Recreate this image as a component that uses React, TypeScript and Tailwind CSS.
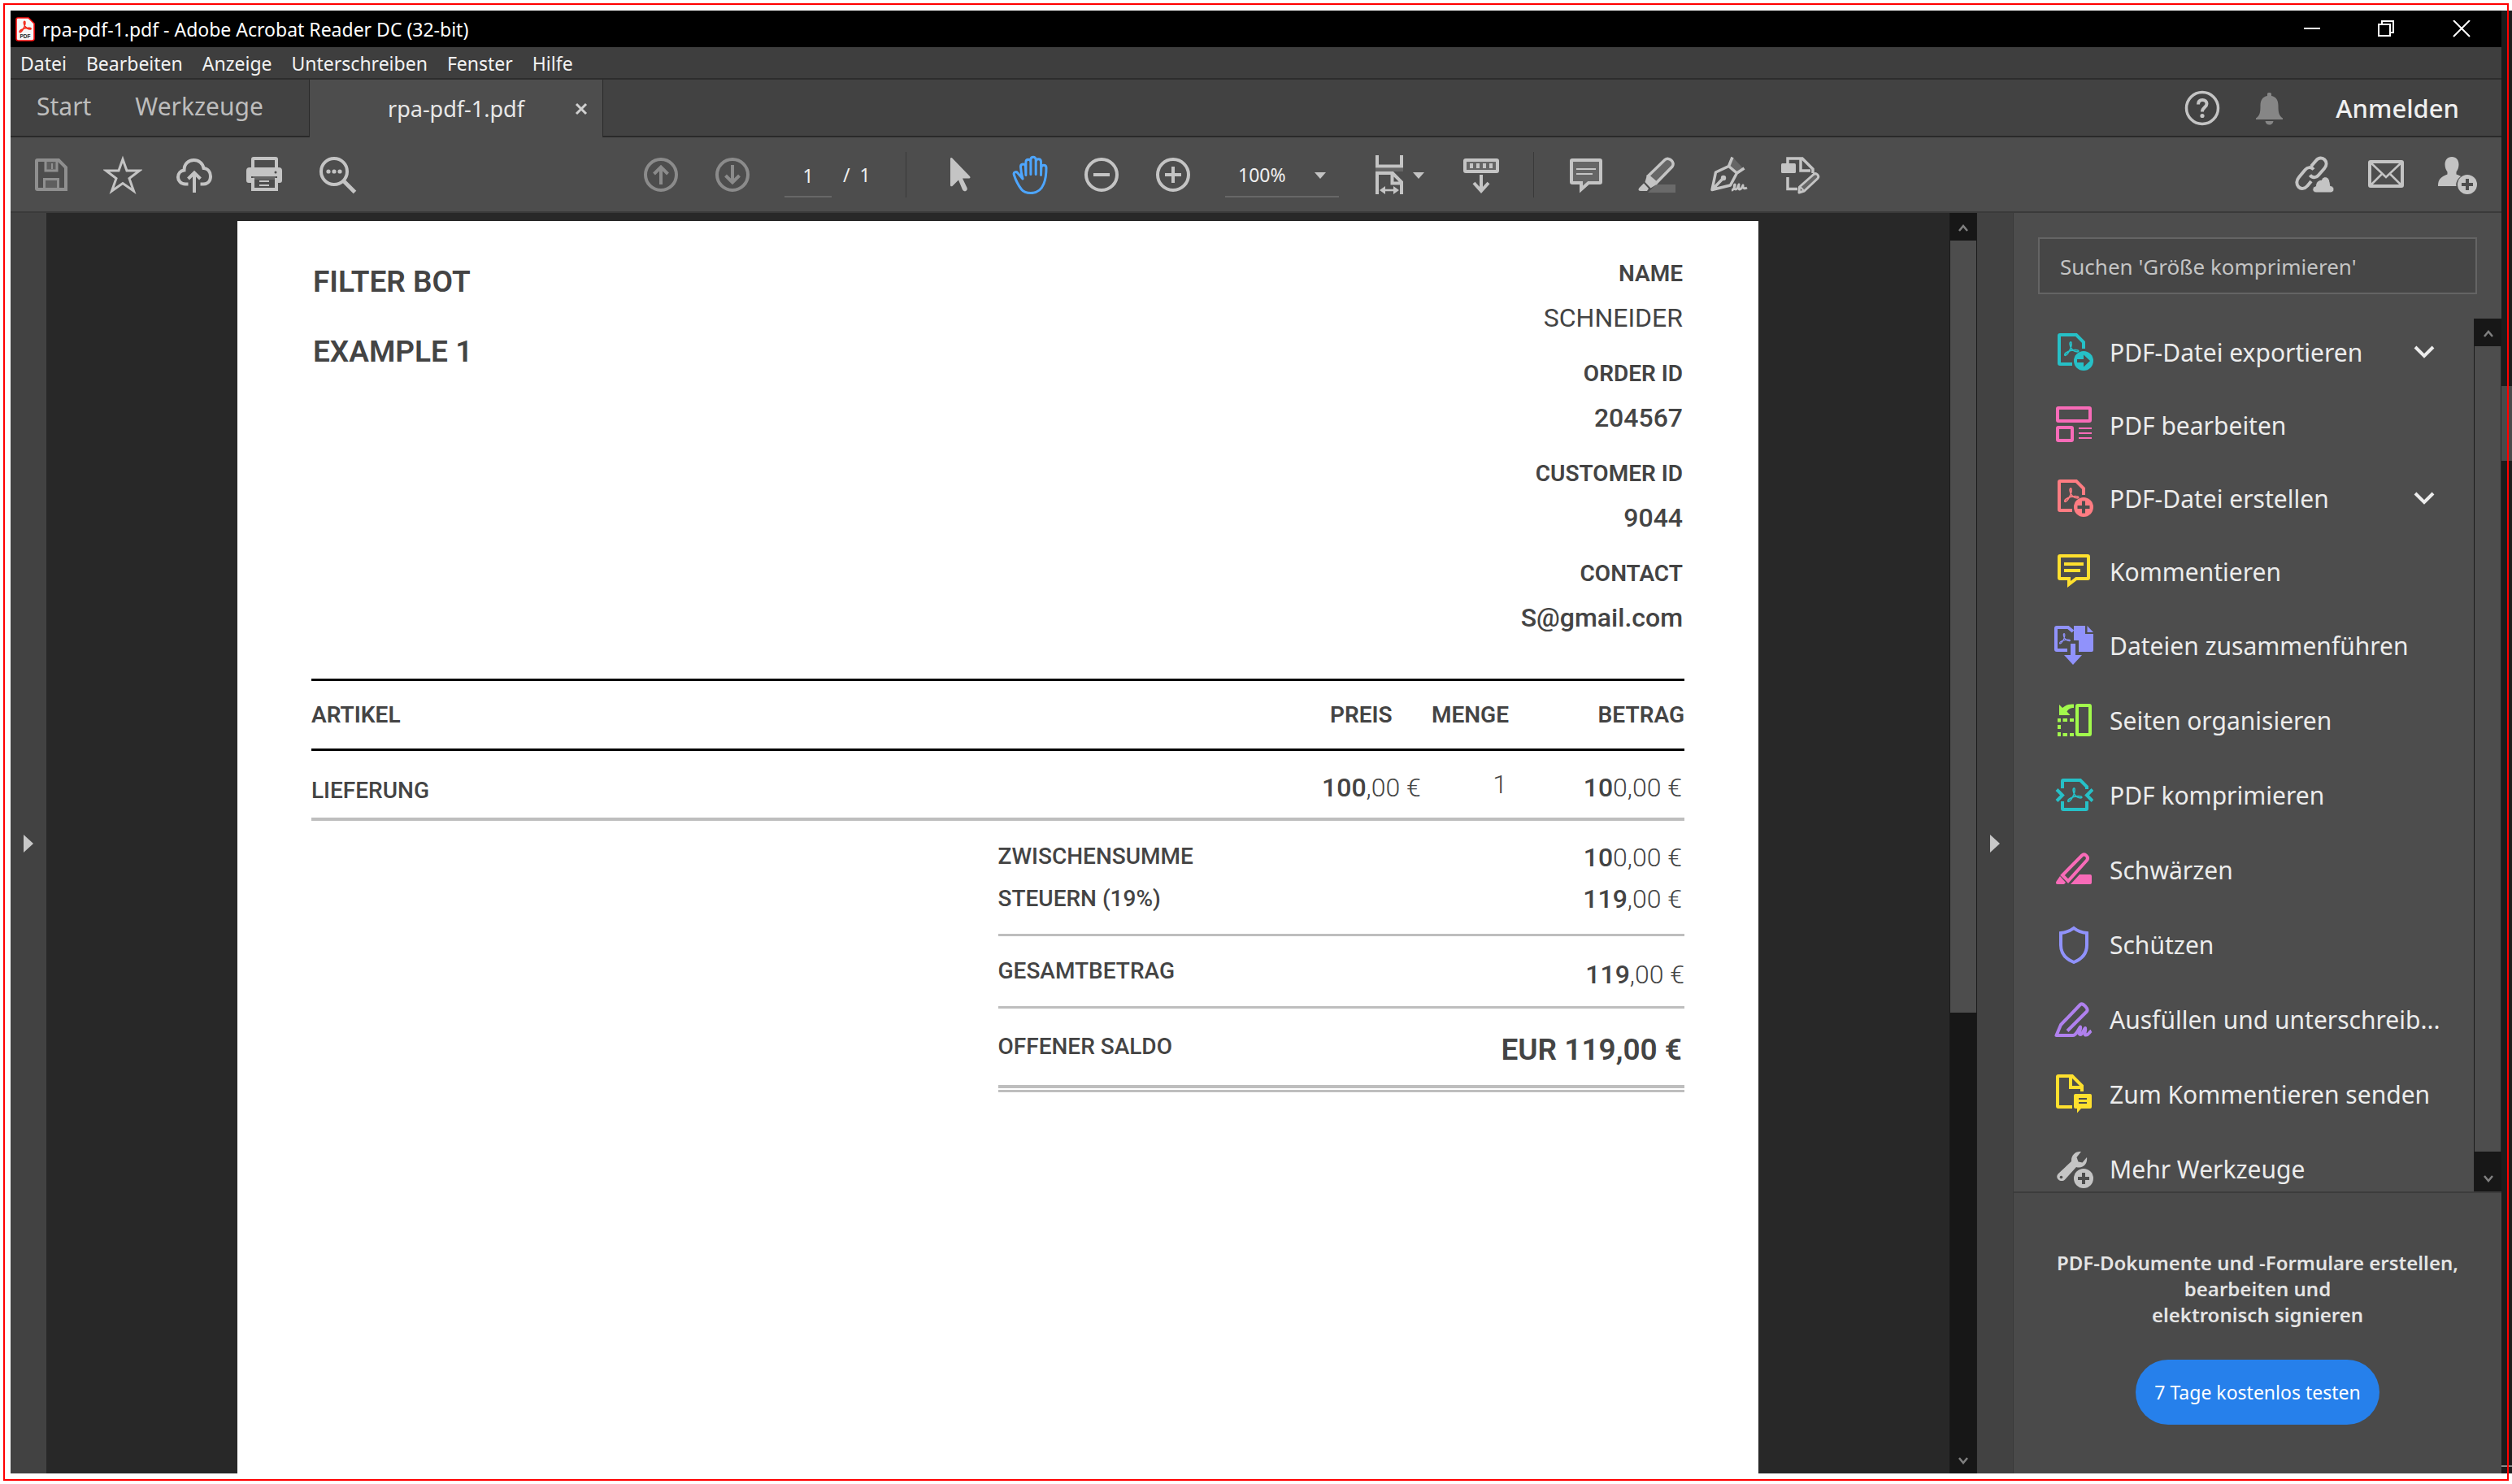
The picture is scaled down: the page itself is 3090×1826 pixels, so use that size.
import type { ReactNode } from "react";

const UI_FONT = "font-['Noto_Sans',sans-serif]";
const DOC_FONT = "font-['Roboto',sans-serif]";

function Icon({ children, className = "" }: { children: ReactNode; className?: string }) {
  return (
    <svg viewBox="0 0 48 48" className={`h-12 w-12 shrink-0 ${className}`} fill="none" stroke="currentColor" strokeWidth={4} aria-hidden="true">
      {children}
    </svg>
  );
}

function IconButton({ label, children, className = "text-[#c4c4c4]" }: { label: string; children: ReactNode; className?: string }) {
  return (
    <button type="button" aria-label={label} className={`flex shrink-0 items-center ${className}`}>
      {children}
    </button>
  );
}

/* Acrobat three-loop mark, drawn in an 18 × 18 area */
function AcrobatMark({ x, y, scale = 1, width = 1.6 }: { x: number; y: number; scale?: number; width?: number }) {
  return (
    <path
      transform={`translate(${x} ${y}) scale(${scale})`}
      strokeWidth={width}
      strokeLinejoin="round"
      d="M8.2 0.8C6.4 1 7 5.6 9 8.6s5.400 4.400 8 4.200c1.600-.400.800-2-1.600-2.100C11 10.500 5.500 12 2.500 14c-2.200 1.500-2.200 3.600-.800 3.300C4 16.500 6.600 12 8 8.500 9.300 5 9.700 1 8.200.8z"
    />
  );
}

const PlusBadge = () => (
  <>
    <circle cx="36" cy="36" r="12" fill="currentColor" stroke="none" />
    <path d="M36 29v14M29 36h14" stroke="#4d4d4d" />
  </>
);

/* ---------- title bar ---------- */

function TitleBar() {
  return (
    <header className="flex h-[45px] items-center bg-black pl-[6px] pr-[38px] text-white">
      <svg viewBox="0 0 24 30" className="h-[30px] w-6" fill="none" aria-hidden="true">
        <path d="M3 1h13l7 7v18.500a2.500 2.500 0 0 1-2.500 2.500h-17A2.500 2.500 0 0 1 1 26.500V3a2 2 0 0 1 2-2z" fill="#f6f6f6" stroke="#f11" strokeWidth="1.600" />
        <g stroke="#f32a1a">
          <AcrobatMark x={4.5} y={4.5} scale={0.82} width={1.9} />
        </g>
        <text x="12" y="26" textAnchor="middle" fontSize="6.500" fontWeight="700" fill="#222" fontFamily="Liberation Sans, sans-serif">PDF</text>
      </svg>
      <h1 className="ml-[9px] text-[23px] leading-8">rpa-pdf-1.pdf - Adobe Acrobat Reader DC (32-bit)</h1>
      <div className="ml-auto flex gap-[70px]">
        <button type="button" aria-label="Minimieren">
          <svg viewBox="0 0 22 22" className="h-[22px] w-[22px]" stroke="white" strokeWidth="2" fill="none"><path d="M1 10h20" /></svg>
        </button>
        <button type="button" aria-label="Wiederherstellen">
          <svg viewBox="0 0 22 22" className="h-[22px] w-[22px]" stroke="white" strokeWidth="2" fill="none"><path d="M1 5h14v14H1zM5 5V1h14v14h-4" /></svg>
        </button>
        <button type="button" aria-label="Schließen">
          <svg viewBox="0 0 22 22" className="h-[22px] w-[22px]" stroke="white" strokeWidth="2" fill="none"><path d="M1 0l20 20M21 0L1 20" /></svg>
        </button>
      </div>
    </header>
  );
}

const MENUS = ["Datei", "Bearbeiten", "Anzeige", "Unterschreiben", "Fenster", "Hilfe"];

function MenuBar() {
  return (
    <nav className="flex h-10 items-center gap-6 border-b-2 border-[#2d2d2d] bg-[#3e3e3e] pl-3 pt-0.5 text-[23px] leading-8 text-[#f2f2f2]">
      {MENUS.map((m) => (
        <button type="button" key={m}>{m}</button>
      ))}
    </nav>
  );
}

function TabRow() {
  return (
    <div className="flex h-[71px] bg-[#424242]">
      <div className="flex w-[368px] items-center gap-[54px] border-b-2 border-r border-[#2a2a2a] pb-1 pl-8 text-[30px] text-[#bdbdbd]">
        <button type="button">Start</button>
        <button type="button">Werkzeuge</button>
      </div>
      <div className="flex w-[360px] items-center bg-[#4d4d4d] pl-[96px] pr-[18px] text-[27px] text-[#e8e8e8]">
        <button type="button" className="pt-0.5">rpa-pdf-1.pdf</button>
        <button type="button" aria-label="Tab schließen" className="ml-auto">
          <svg viewBox="0 0 16 16" className="h-4 w-4" stroke="#d0d0d0" strokeWidth="3" fill="none"><path d="M2 2l12 12M14 2L2 14" /></svg>
        </button>
      </div>
      <div className="flex flex-1 items-center justify-end border-b-2 border-l border-[#2a2a2a] pr-[52px] text-[#c4c4c4]">
        <IconButton label="Hilfe">
          <Icon>
            <circle cx="24" cy="24" r="19.500" strokeWidth="3.500" />
            <path d="M19 19.500c0-3.500 2-5.500 5.200-5.500s5.300 1.800 5.300 4.800c0 4.200-5.500 4.500-5.500 9.700" />
            <circle cx="24" cy="33.500" r="2.600" fill="currentColor" stroke="none" />
          </Icon>
        </IconButton>
        <button type="button" aria-label="Benachrichtigungen" className="ml-[35px] text-[#868686]">
          <Icon>
            <path d="M21 9V6.500C21 5.500 22 5 23.500 5S26 5.500 26 6.500V9c6 1.200 8.500 5.500 8.500 12 0 8 .500 12 5.500 15.500V38H7v-1.500C12 33 12.500 29 12.500 21c0-6.500 2.500-10.800 8.500-12zM18.500 40h10c-.500 3-2.500 4.500-5 4.500s-4.500-1.500-5-4.500z" fill="currentColor" stroke="none" />
          </Icon>
        </button>
        <button type="button" className="ml-[57px] pt-0.5 text-[31px] font-medium text-[#f0f0f0]">Anmelden</button>
      </div>
    </div>
  );
}

/* ---------- toolbar ---------- */

const Separator = () => <div className="h-14 w-px shrink-0 bg-[#393939]" />;

function Toolbar() {
  return (
    <div className="flex h-[93px] items-center border-b-2 border-[#3a3a3a] bg-[#4d4d4d] pl-[26px] pr-[30px]">
      <div className="flex flex-1 gap-10">
        <IconButton label="Speichern" className="text-[#8f8f8f]">
          <Icon>
            <path d="M17 6h14v14H17zM14 28h20v14H14z" fill="#5e5e5e" stroke="none" />
            <path d="M7 6h26l9 9v27H7a1 1 0 0 1-1-1V7a1 1 0 0 1 1-1z" />
            <path d="M17 6v13h14V6M15.500 43V29.500h17V43" strokeWidth="3" />
            <path d="M25 10v7" strokeWidth="2" />
          </Icon>
        </IconButton>
        <IconButton label="Favorit">
          <Icon>
            <path d="M24 5l5 14h15.500L32 28.500l5.500 15.500L24 34.500 10.500 44 16 28.500 3.500 19H19z" strokeWidth="3" />
          </Icon>
        </IconButton>
        <IconButton label="In Cloud hochladen">
          <Icon>
            <path d="M16.500 35.500H13C7.500 35.500 4 31.500 4 27c0-4.500 3-8 7.500-8.500C11.500 11 16.500 6 23.500 6c6 0 11 4 12 10 5 .500 8.500 4.500 8.500 10 0 5.500-3.500 9.500-9 9.500h-3.500" />
            <path d="M24 46V22M16.500 29l7.500-7.500L31.500 29" />
          </Icon>
        </IconButton>
        <IconButton label="Drucken">
          <Icon>
            <rect x="8" y="4" width="29" height="14" rx="1" />
            <path d="M4 15h36a4 4 0 0 1 4 4v12a3 3 0 0 1-3 3h-3v-8H6v8H3a3 3 0 0 1-3-3V19a4 4 0 0 1 4-4z" fill="currentColor" stroke="none" />
            <path d="M8 26h28v4H8z" fill="#666" stroke="none" />
            <path d="M8 28v14h29V28" />
            <path d="M16 32h12M16 37h12" strokeWidth="2" />
            <circle cx="36" cy="21" r="1.500" fill="#4d4d4d" stroke="none" />
          </Icon>
        </IconButton>
        <IconButton label="Suchen">
          <Icon>
            <circle cx="20" cy="20" r="16" />
            <path d="M32 32l13.500 13.500" strokeWidth="5" />
            <g fill="currentColor" stroke="none">
              <circle cx="13" cy="20" r="2.600" /><circle cx="20" cy="20" r="2.600" /><circle cx="27" cy="20" r="2.600" />
            </g>
          </Icon>
        </IconButton>
      </div>

      <div className="flex items-center gap-10 pr-[58px] text-[23px] text-[#f0f0f0]">
        <IconButton label="Vorherige Seite" className="text-[#8b8b8b]">
          <Icon><circle cx="24" cy="24" r="19" /><path d="M24 36V16M15.500 23l8.500-8.500 8.500 8.500" /></Icon>
        </IconButton>
        <IconButton label="Nächste Seite" className="text-[#8b8b8b]">
          <Icon><circle cx="24" cy="24" r="19" /><path d="M24 12v20M15.500 25l8.500 8.500 8.500-8.500" /></Icon>
        </IconButton>
        <div className="flex w-[109px] items-end gap-[14px]">
          <input aria-label="Seitenzahl" defaultValue="1" className="h-14 w-[58px] border-b-2 border-[#676767] bg-transparent pt-1 text-center outline-none" />
          <span className="whitespace-pre pb-[10px]">/  1</span>
        </div>
        <Separator />
        <IconButton label="Auswahlwerkzeug">
          <Icon>
            <path d="M14 4.500c0-1.500 1.500-2 2.500-.700L38 26c1 1.500.500 2.500-1 2.500h-8l5.500 11.500c1.500 4-3.500 6-5.500 2.500l-5-12-7 7c-1.500 1.500-3 1-3-1z" fill="currentColor" stroke="none" />
          </Icon>
        </IconButton>
        <IconButton label="Handwerkzeug" className="text-[#4ea6ff]">
          <Icon>
            <path d="M15 29L8.500 21.500c-1.500-1.700-5.200-.800-4.200 2.500C6.500 31 10 37.500 13.500 42c2.500 3.200 6 4.500 11.500 4.500 8 0 13-4 16-11.500 2-5 3-10 3-19.500 0-4.500-6-4.500-6.200 0l-.300 9V8c0-4.500-6.300-4.500-6.300 0v15.500V5.500c0-4.300-6.300-4.300-6.300 0v18V8.500c0-4.300-6-4.300-6 0v16L18.500 14c-.500-4.500-6.300-3.500-6 .500.300 5 1 9 2.500 14.500z" strokeWidth="3" strokeLinejoin="round" />
          </Icon>
        </IconButton>
        <IconButton label="Verkleinern">
          <Icon><circle cx="24" cy="24" r="19" /><path d="M14 24h20" /></Icon>
        </IconButton>
        <IconButton label="Vergrößern">
          <Icon><circle cx="24" cy="24" r="19" /><path d="M14 24h20M24 14v20" /></Icon>
        </IconButton>
        <div className="relative w-[140px]">
          <select aria-label="Zoomstufe" className="h-14 w-full appearance-none border-b-2 border-[#676767] bg-transparent pl-4 pt-1 outline-none">
            <option>100%</option>
          </select>
          <svg viewBox="0 0 14 8" className="pointer-events-none absolute right-4 top-[25px] h-2 w-[14px]" fill="#c4c4c4" aria-hidden="true"><path d="M0 0h14L7 8z" /></svg>
        </div>
        <button type="button" aria-label="Seite anpassen" className="text-[#c4c4c4]">
          <svg viewBox="0 0 71 48" className="h-12 w-[71px]" fill="none" stroke="currentColor" strokeWidth="4" aria-hidden="true">
            <path d="M7 0v13.500h30V0" />
            <path d="M5 16h34v4H5z" fill="#666" stroke="none" />
            <path d="M7 48V22h19l11 11v15M25.500 22v12.500H37" />
            <path d="M15 43h14" strokeWidth="2.500" />
            <path d="M10 43l7-5v10zM34 43l-7-5v10z" fill="currentColor" stroke="none" />
            <path d="M51 21h14l-7 8z" fill="currentColor" stroke="none" />
          </svg>
        </button>
        <IconButton label="Tastatur">
          <Icon>
            <rect x="4" y="6" width="40" height="14" rx="1" fill="#666" />
            <path d="M12 10v6M20 10v6M28 10v6M36 10v6" />
            <path d="M24 24v19M15 34l9 10 9-10" />
          </Icon>
        </IconButton>
        <Separator />
        <IconButton label="Kommentar">
          <Icon>
            <path d="M7 6h34a1 1 0 0 1 1 1v26a1 1 0 0 1-1 1H27l-9 8v-8H7a1 1 0 0 1-1-1V7a1 1 0 0 1 1-1z" fill="#666" />
            <path d="M12 17h24M12 23h20" strokeWidth="2" />
          </Icon>
        </IconButton>
        <IconButton label="Hervorheben">
          <Icon>
            <path d="M12 46l10-10h24v10z" fill="#6a6a6a" stroke="none" />
            <path d="M12.500 25.500L33 5.500c5-4 13 3 9 8.500L22.500 34z" fill="#666" strokeWidth="3.500" />
            <path d="M11 24.500l12.500 11-8 5-7-7.500zM7 34.500l6 6.500-2 3H3c-3 0-3-2-1.500-4z" fill="currentColor" stroke="none" />
          </Icon>
        </IconButton>
        <IconButton label="Unterschrift">
          <Icon>
            <path d="M29 3l13 14-8 4.500-9-8z" fill="#666" stroke="none" />
            <path d="M28 2.500L23.500 13.500 7.500 21 3 42.500 25.500 37l8-15L23.500 13.500M42.500 16l-9 6M3.500 42L16 29" strokeWidth="3.500" strokeLinejoin="round" />
            <circle cx="17" cy="28" r="3.200" fill="currentColor" stroke="none" />
            <path d="M27 43c3 0 5-7 4-7s-1 6 1 6 4-6 4-6-1 6 1 6 4-5 4-5-1 6 5 3" strokeWidth="3" strokeLinejoin="round" />
          </Icon>
        </IconButton>
        <IconButton label="Seiten bearbeiten">
          <Icon>
            <path d="M8 11V4h18l13 13v5" strokeWidth="3.500" />
            <path d="M24 5v14h12" strokeWidth="3.500" />
            <rect x="0" y="10" width="18" height="12" rx="1.500" fill="currentColor" stroke="none" />
            <path d="M8 27v14.500h12" strokeWidth="3.500" />
            <path d="M40 23.500c3-2.500 7.500 1.500 5 5L28.500 44l-6.500 2 .500-7z" fill="#666" strokeWidth="3" strokeLinejoin="round" />
            <path d="M23 38.500l5 5" strokeWidth="2" />
          </Icon>
        </IconButton>
      </div>

      <div className="flex flex-1 justify-end gap-10">
        <IconButton label="Link freigeben">
          <Icon>
            <path d="M20 13.500l6-7c3.500-4 8-3.500 10.500-1s3 7-.500 11l-7 8c-3 3.500-8 3.500-10.500 0M23 17.500c-3-3.500-7.500-3-10.500.500L5 27c-3.500 4-3.500 9-.500 12s7.500 2.500 11-1.500l4.500-5.500" />
            <path d="M26 46c-5 0-6-7-.500-8 0-5 4-8 7-7.500 2-6 10-5 10.500 3 .500 2 .500 3 .500 4 6 .500 6 8.500 0 8.500z" fill="currentColor" stroke="#4d4d4d" strokeWidth="1" />
          </Icon>
        </IconButton>
        <IconButton label="Per E-Mail senden">
          <Icon>
            <rect x="4" y="8" width="40" height="30" rx="1" />
            <path d="M5 9l19 18L43 9M5 37l14-14M43 37L29 23" strokeWidth="2.500" />
          </Icon>
        </IconButton>
        <IconButton label="Personen hinzufügen">
          <Icon>
            <path d="M17 2c5.500 0 8.500 4 8.500 9.500 0 4-1.500 7-3 9v3c3 1 5 2 5.500 2.500-4 3-6.500 8-5.500 12H0C0 30 3 27 11.500 23.500v-3c-1.500-2-3-5-3-9C8.500 6 11.500 2 17 2z" fill="currentColor" stroke="none" />
            <PlusBadge />
          </Icon>
        </IconButton>
      </div>
    </div>
  );
}

/* ---------- document ---------- */

const FACTS = [
  { label: "NAME", value: "SCHNEIDER", weight: "font-normal" },
  { label: "ORDER ID", value: "204567", weight: "font-medium" },
  { label: "CUSTOMER ID", value: "9044", weight: "font-medium" },
  { label: "CONTACT", value: "S@gmail.com", weight: "font-medium" },
];

function Amount({ strong, rest }: { strong: string; rest: string }) {
  return (
    <span className="font-light">
      <span className="font-medium">{strong}</span>
      {rest}
    </span>
  );
}

function Invoice() {
  return (
    <article className={`mx-[235px] mt-[10px] flex-1 bg-white px-[91px] pt-10 text-[#444] ${DOC_FONT}`}>
      <div className="flex justify-between px-0.5">
        <div className="pt-[13px] text-[37px] font-semibold leading-[44px]">
          <h2>FILTER BOT</h2>
          <p className="mt-[42px]">EXAMPLE 1</p>
        </div>
        <dl className="grid gap-[15px] text-right">
          {FACTS.map((f) => (
            <div key={f.label}>
              <dt className="text-[28px] font-semibold leading-[50px]">{f.label}</dt>
              <dd className={`text-[32px] leading-[58px] ${f.weight}`}>{f.value}</dd>
            </div>
          ))}
        </dl>
      </div>

      <table className="mt-[46px] w-full">
        <thead>
          <tr className="h-[86px] border-y-3 border-black text-left text-[28px]">
            <th className="font-semibold">ARTIKEL</th>
            <th className="w-[132px] pl-[10px] font-semibold">PREIS</th>
            <th className="w-[100px] pr-0.5 text-right font-semibold">MENGE</th>
            <th className="w-[214px] text-right font-semibold">BETRAG</th>
          </tr>
        </thead>
        <tbody>
          <tr className="h-[85px] border-b-4 border-[#bebebe] text-[32px]">
            <td className="pt-4 text-[28px] font-medium">LIEFERUNG</td>
            <td className="pt-2"><Amount strong="100" rest=",00 €" /></td>
            <td className="pr-1 text-right font-light">1</td>
            <td className="pr-[3px] pt-2 text-right"><Amount strong="10" rest="0,00 €" /></td>
          </tr>
        </tbody>
      </table>

      <table className="ml-auto w-1/2 border-b-3 border-[#bebebe]">
        <tbody className="text-right text-[32px]">
          <tr className="h-[71px]">
            <th className="pt-[18px] text-left text-[28px] font-medium">ZWISCHENSUMME</th>
            <td className="pr-[3px] pt-5"><Amount strong="10" rest="0,00 €" /></td>
          </tr>
          <tr className="h-[70px] border-b-3 border-[#bebebe]">
            <th className="pb-[17px] text-left text-[28px] font-medium">STEUERN (19%)</th>
            <td className="pb-[17px] pr-[3px]"><Amount strong="119" rest=",00 €" /></td>
          </tr>
          <tr className="h-[89px] border-b-3 border-[#bebebe]">
            <th className="text-left text-[28px] font-medium">GESAMTBETRAG</th>
            <td className="pt-2"><Amount strong="119" rest=",00 €" /></td>
          </tr>
          <tr className="h-[97px] border-b-4 border-[#bebebe]">
            <th className="text-left text-[28px] font-medium">OFFENER SALDO</th>
            <td className="pr-[3px] pt-2 text-[37px] font-semibold">EUR 119,00 €</td>
          </tr>
          <tr className="h-[6px]"><td colSpan={2} className="p-0" /></tr>
        </tbody>
      </table>
    </article>
  );
}

/* ---------- side panels ---------- */

function Caret({ up = false }: { up?: boolean }) {
  return (
    <svg viewBox="0 0 12 12" className="h-3 w-3" fill="none" stroke="#808080" strokeWidth="2.500" aria-hidden="true">
      <path d={up ? "M1 9l5-6 5 6" : "M1 3l5 6 5-6"} />
    </svg>
  );
}

function PaneHandle({ label }: { label: string }) {
  return (
    <button type="button" aria-label={label} className="flex w-11 shrink-0 items-center justify-center bg-[#424242]">
      <svg viewBox="0 0 12 22" className="h-[22px] w-3" fill="#c8c8c8" aria-hidden="true"><path d="M0 0l12 11L0 22z" /></svg>
    </button>
  );
}

const DocShape = () => <path d="M22 39H7a1 1 0 0 1-1-1V4a1 1 0 0 1 1-1h20l9 9v8" />;

type Tool = { name: string; color: string; expandable?: boolean; tall?: boolean; art: ReactNode };

const TOOLS: Tool[] = [
  {
    name: "PDF-Datei exportieren", color: "text-[#26c0c7]", expandable: true,
    art: (
      <>
        <DocShape />
        <AcrobatMark x={12} y={11} />
        <circle cx="36" cy="35" r="12" fill="currentColor" stroke="none" />
        <path d="M28 33h8v-5.500l8 7.500-8 7.500V37h-8z" fill="#4d4d4d" stroke="none" />
      </>
    ),
  },
  {
    name: "PDF bearbeiten", color: "text-[#f86bb8]",
    art: (
      <>
        <rect x="4" y="3" width="40" height="16" rx="1" />
        <rect x="4" y="27" width="18" height="16" rx="1" />
        <path d="M30 28h16M30 34h16M30 40h16" strokeWidth="2" />
      </>
    ),
  },
  {
    name: "PDF-Datei erstellen", color: "text-[#ff7c82]", expandable: true,
    art: (
      <>
        <DocShape />
        <AcrobatMark x={12} y={11} />
        <circle cx="36" cy="35" r="12" fill="currentColor" stroke="none" />
        <path d="M36 27.500v15M28.500 35h15" stroke="#4d4d4d" />
      </>
    ),
  },
  {
    name: "Kommentieren", color: "text-[#ffe02e]",
    art: (
      <>
        <path d="M7 5h34a1 1 0 0 1 1 1v26a1 1 0 0 1-1 1H27l-9 7v-7H7a1 1 0 0 1-1-1V6a1 1 0 0 1 1-1z" />
        <path d="M12 15h24M12 23h20" />
      </>
    ),
  },
  {
    name: "Dateien zusammenführen", color: "text-[#9092fb]", tall: true,
    art: (
      <>
        <path d="M16 30H3a1 1 0 0 1-1-1V3a1 1 0 0 1 1-1h14l6 5" />
        <AcrobatMark x={6} y={9} scale={0.75} />
        <path d="M24 0h14v10h10v20a2 2 0 0 1-2 2H30V18h-6zM40.500 0L48 8h-7.500zM20 22h6v14h8L23 48 12 36h8z" fill="currentColor" stroke="none" />
      </>
    ),
  },
  {
    name: "Seiten organisieren", color: "text-[#a2fa4c]", tall: true,
    art: (
      <>
        <rect x="28" y="6" width="16" height="36" rx="1" />
        <path d="M6 22v4.500M6 30v5M6 39v5M10.500 24H16M19 24h5M10.500 42H16M19 42h5" />
        <path d="M6 5l4 4c4-3.500 8-5 14-4.500V9c-4 0-6 1-8.500 4.500l4 4.500H6z" fill="currentColor" stroke="none" />
      </>
    ),
  },
  {
    name: "PDF komprimieren", color: "text-[#26c0c7]", tall: true,
    art: (
      <>
        <path d="M10 16V7a1 1 0 0 1 1-1h21l8 8v3M10 32v9a1 1 0 0 0 1 1h28a1 1 0 0 0 1-1v-9" />
        <path d="M3 17.500l7 7-7 7M47 17.500l-7 7 7 7" />
        <AcrobatMark x={16} y={15} />
      </>
    ),
  },
  {
    name: "Schwärzen", color: "text-[#f86bb8]", tall: true,
    art: (
      <>
        <path d="M10 31L34 6.500c3.500-3 9 2 6 6L17 38z" />
        <path d="M7 32l7 8-2 2H4c-2 0-2.500-1.500-1.500-3.500zM20 42l11-12h13a2 2 0 0 1 2 2v8a2 2 0 0 1-2 2z" fill="currentColor" stroke="none" />
      </>
    ),
  },
  {
    name: "Schützen", color: "text-[#9092fb]", tall: true,
    art: <path d="M24 4c4.500 3.500 10 5.500 16 6v15c0 10.500-6 17-16 21C14 42 8 35.500 8 25V10c6-.500 11.500-2.500 16-6z" />,
  },
  {
    name: "Ausfüllen und unterschreib...", color: "text-[#b081ee]", tall: true,
    art: (
      <path d="M16 38.500L40 14.500c2.500-3-5-11-8-8.500L8 31 2.500 44H23c4 0 7-8 9-10.500 1.500 1-3.500 9.500 0 9.500 3 0 4-6 6-8 1.500.500-2.500 8.500 1 8.500 3.500 0 3.500-3.500 6.500-5" strokeLinejoin="round" />
    ),
  },
  {
    name: "Zum Kommentieren senden", color: "text-[#ffe02e]", tall: true,
    art: (
      <>
        <path d="M22 40H5a1 1 0 0 1-1-1V3a1 1 0 0 1 1-1h17l12 12v7M20 3v13h13" />
        <path d="M26 24h18a2 2 0 0 1 2 2v14a2 2 0 0 1-2 2H33l-5 5.500V42h-2a2 2 0 0 1-2-2V26a2 2 0 0 1 2-2z" fill="currentColor" stroke="none" />
        <path d="M30 30h10M30 35h10" stroke="#4d4d4d" strokeWidth="2" />
      </>
    ),
  },
  {
    name: "Mehr Werkzeuge", color: "text-[#c4c4c4]", tall: true,
    art: (
      <>
        <path d="M33 3l-5.500 7 2 5.500 5 1L40 10c1 6-2.500 12.500-9.500 12.500-1.500 0-2.500 0-3.500-.500L13 37.500C8.500 42 0 36 4.500 30.500L21 15C20.500 7.500 26 2 33 3z" fill="currentColor" stroke="none" />
        <circle cx="8.500" cy="34.500" r="1.800" fill="#4d4d4d" stroke="none" />
        <circle cx="36" cy="36" r="13.500" fill="#4d4d4d" stroke="none" />
        <PlusBadge />
      </>
    ),
  },
];

function ToolsPanel() {
  return (
    <aside className="flex w-[601px] shrink-0 flex-col border-l border-[#3a3a3a] bg-[#4d4d4d]">
      <div className="px-[30px] pt-[30px]">
        <input
          type="search"
          aria-label="Werkzeuge suchen"
          placeholder="Suchen 'Größe komprimieren'"
          className="h-[70px] w-full border-2 border-[#646464] bg-[#464646] px-[25px] pt-0.5 text-[26px] outline-none placeholder:text-[#c4c4c4]"
        />
      </div>
      <div className="mt-[26px] flex min-h-0 flex-1 overflow-hidden">
        <ul className="min-w-0 flex-1 text-[30px] text-[#ececec]">
          {TOOLS.map((t) => (
            <li key={t.name}>
              <button type="button" className={`flex w-full items-center pl-[50px] pr-12 ${t.tall ? "h-[92px]" : "h-[90px]"}`}>
                <Icon className={t.color}>{t.art}</Icon>
                <span className="ml-5 whitespace-nowrap">{t.name}</span>
                {t.expandable && (
                  <svg viewBox="0 0 26 16" className="ml-auto h-4 w-[26px]" fill="none" stroke="#ececec" strokeWidth="4" aria-hidden="true"><path d="M2 2l11 11L24 2" /></svg>
                )}
              </button>
            </li>
          ))}
        </ul>
        <div className="mt-1 flex w-[34px] flex-col border-l border-[#1a1a1a] bg-[#171717]">
          <div className="flex h-[34px] items-center justify-center pt-1"><Caret up /></div>
          <div className="flex-1 border-r border-[#262626] bg-[#4d4d4d]" />
          <div className="flex h-[49px] items-center justify-center pt-4"><Caret /></div>
        </div>
      </div>
      <div className="flex h-[347px] flex-col items-center border-t-2 border-[#3c3c3c] bg-[#4a4a4a] pt-[70px]">
        <p className="text-center text-[24px] font-semibold leading-8 text-[#e4e4e4]">
          PDF-Dokumente und -Formulare erstellen,
          <br />
          bearbeiten und
          <br />
          elektronisch signieren
        </p>
        <button type="button" className="mt-[39px] h-20 w-[300px] rounded-full bg-[#2680eb] text-[23px] text-white">
          7 Tage kostenlos testen
        </button>
      </div>
    </aside>
  );
}

export default function App() {
  return (
    <div className={`relative flex h-screen overflow-hidden bg-white py-[13px] pl-[13px] ${UI_FONT}`}>
      <div className="flex min-w-0 flex-1 flex-col">
        <TitleBar />
        <MenuBar />
        <TabRow />
        <Toolbar />
        <div className="flex min-h-0 flex-1">
          <PaneHandle label="Navigationsfenster öffnen" />
          <main className="flex min-w-0 flex-1 flex-col overflow-hidden bg-[#282828]">
            <Invoice />
          </main>
          <div className="flex w-[34px] shrink-0 flex-col border-x border-[#1a1a1a] bg-[#171717]">
            <div className="flex h-[34px] items-center justify-center pt-1"><Caret up /></div>
            <div className="flex-[16] bg-[#4d4d4d]" />
            <div className="flex-[9]" />
            <div className="flex h-8 items-center justify-center"><Caret /></div>
          </div>
          <PaneHandle label="Werkzeugfenster schließen" />
          <ToolsPanel />
        </div>
      </div>
      <div className="flex w-[13px] shrink-0 flex-col bg-[#1c1c1c] pt-[462px]">
        <div className="h-[92px] bg-[#4a4a4a]" />
        <div className="mb-2 mt-auto h-[2px] bg-[#8a8a8a]" />
      </div>
      <div className="pointer-events-none absolute inset-1 border-2 border-[#f00]" />
    </div>
  );
}
